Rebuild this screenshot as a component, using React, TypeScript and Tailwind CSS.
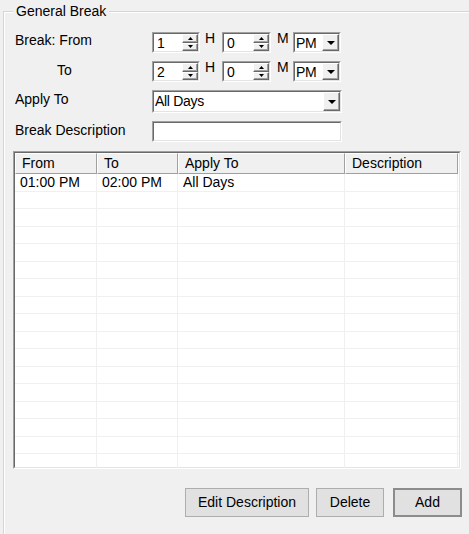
import React from 'react';

const rows = [
  { from: '01:00 PM', to: '02:00 PM', apply: 'All Days', desc: '' },
];

const cols = [
  { name: 'From', w: 'w-[82px]' },
  { name: 'To', w: 'w-[81px]' },
  { name: 'Apply To', w: 'w-[167px]' },
  { name: 'Description', w: 'w-[113px]' },
];

const Sunken: React.FC<{ className?: string; children?: React.ReactNode }> = ({ className = '', children }) => (
  <div className={`border border-[#a0a0a0] border-b-white border-r-white ${className}`}>
    <div className="h-full border border-[#696969] border-b-[#e3e3e3] border-r-[#e3e3e3] bg-white">{children}</div>
  </div>
);

const Arrow: React.FC<{ up?: boolean; big?: boolean }> = ({ up, big }) =>
  big ? (
    <svg width="8" height="4" viewBox="0 0 8 4">
      <path d="M0 0h8L4 4z" fill="#000" />
    </svg>
  ) : (
    <svg width="5" height="3" viewBox="0 0 5 3">
      <path d={up ? 'M2.5 0L5 3H0z' : 'M0 0h5L2.5 3z'} fill="#000" />
    </svg>
  );

const RaisedBtn: React.FC<{ className?: string; children?: React.ReactNode }> = ({ className = '', children }) => (
  <div className={`flex items-center justify-center bg-[#f0f0f0] border border-white border-b-[#696969] border-r-[#696969] shadow-[inset_-1px_-1px_0_#a0a0a0] ${className}`}>
    {children}
  </div>
);

const Spinner: React.FC<{ value: string; w: string }> = ({ value, w }) => (
  <Sunken className={`${w} h-[21px]`}>
    <div className="flex h-full">
      <span className="flex-1 pl-[3px] leading-[18px]">{value}</span>
      <div className="flex w-[16px] flex-col">
        <RaisedBtn className="flex-1"><Arrow up /></RaisedBtn>
        <RaisedBtn className="flex-1"><Arrow /></RaisedBtn>
      </div>
    </div>
  </Sunken>
);

const Combo: React.FC<{ value: string; w: string; h: string }> = ({ value, w, h }) => (
  <Sunken className={`${w} ${h}`}>
    <div className="flex h-full">
      <span className="flex-1 pl-[1px] leading-[18px] tracking-[-0.3px]">{value}</span>
      <RaisedBtn className="w-[17px]"><Arrow big /></RaisedBtn>
    </div>
  </Sunken>
);

const TimeRow: React.FC<{ h: string }> = ({ h }) => (
  <div className="flex items-start">
    <Spinner value={h} w="w-[48px]" />
    <span className="-mt-[1px] ml-[5px] w-[17px] leading-[14px]">H</span>
    <Spinner value="0" w="w-[49px]" />
    <span className="-mt-[1px] ml-[6px] w-[16px] leading-[14px]">M</span>
    <Combo value="PM" w="w-[48px]" h="h-[21px]" />
  </div>
);

const Btn: React.FC<{ className?: string; children: React.ReactNode }> = ({ className = '', children }) => (
  <button className={`h-[29px] bg-[#e1e1e1] ${className}`}>{children}</button>
);

export default function App() {
  return (
    <div className="h-[534px] w-[469px] overflow-hidden bg-[#f0f0f0] font-['Liberation_Sans',Arial,sans-serif] text-[14px] text-black">
      <div className="relative ml-[3px] mt-[11px] h-[560px] w-[490px] border-l border-t border-[#d5d5d5] shadow-[inset_1px_1px_0_#fff]">
        <span className="absolute -top-[9px] left-[9px] bg-[#f0f0f0] px-[3px] leading-[16px]">General Break</span>

        <div className="pl-[11px] pt-[20px]">
          <div className="grid grid-cols-[137px_auto] items-start">
            <span className="leading-[16px]">Break: From</span>
            <TimeRow h="1" />

            <span className="mt-[9px] pl-[42px] leading-[16px]">To</span>
            <div className="mt-[8px]"><TimeRow h="2" /></div>

            <span className="mt-[9px] leading-[16px]">Apply To</span>
            <div className="mt-[8px]"><Combo value="All Days" w="w-[190px]" h="h-[23px]" /></div>

            <span className="mt-[9px] leading-[16px]">Break Description</span>
            <div className="mt-[8px]"><Sunken className="h-[21px] w-[190px]" /></div>
          </div>

          {/* list view */}
          <div className="-ml-[2px] mt-[9px] h-[318px] w-[448px] overflow-hidden border border-[#a0a0a0] border-b-white border-r-white">
            <div className="h-full border border-[#696969] border-b-[#e3e3e3] border-r-[#e3e3e3] bg-white">
              <div className="flex h-[21px]">
                {cols.map((c) => (
                  <div key={c.name} className={`${c.w} shrink-0 border border-white border-b-[#a0a0a0] border-r-[#a0a0a0] bg-[#f0f0f0] pl-[6px] leading-[18px]`}>
                    {c.name}
                  </div>
                ))}
              </div>
              {Array.from({ length: 18 }).map((_, i) => {
                const r = rows[i];
                return (
                  <div key={i} className="flex h-[17.5px] border-b border-[#f0f0f0]">
                    <div className="w-[82px] shrink-0 border-r border-[#f0f0f0] pl-[5px] leading-[17px]">{r?.from}</div>
                    <div className="w-[81px] shrink-0 border-r border-[#f0f0f0] pl-[5px] leading-[17px]">{r?.to}</div>
                    <div className="w-[167px] shrink-0 border-r border-[#f0f0f0] pl-[5px] leading-[17px]">{r?.apply}</div>
                    <div className="w-[113px] shrink-0 border-r border-[#f0f0f0] pl-[5px] leading-[17px]">{r?.desc}</div>
                  </div>
                );
              })}
            </div>
          </div>

          <div className="-ml-[2px] mt-[19px] flex w-[449px] justify-end">
            <Btn className="w-[124px] border border-[#adadad]">Edit Description</Btn>
            <Btn className="ml-[7px] w-[68px] border border-[#adadad]">Delete</Btn>
            <Btn className="ml-[9px] w-[69px] border-2 border-[#8c8c8c]">Add</Btn>
          </div>
        </div>
      </div>
    </div>
  );
}
